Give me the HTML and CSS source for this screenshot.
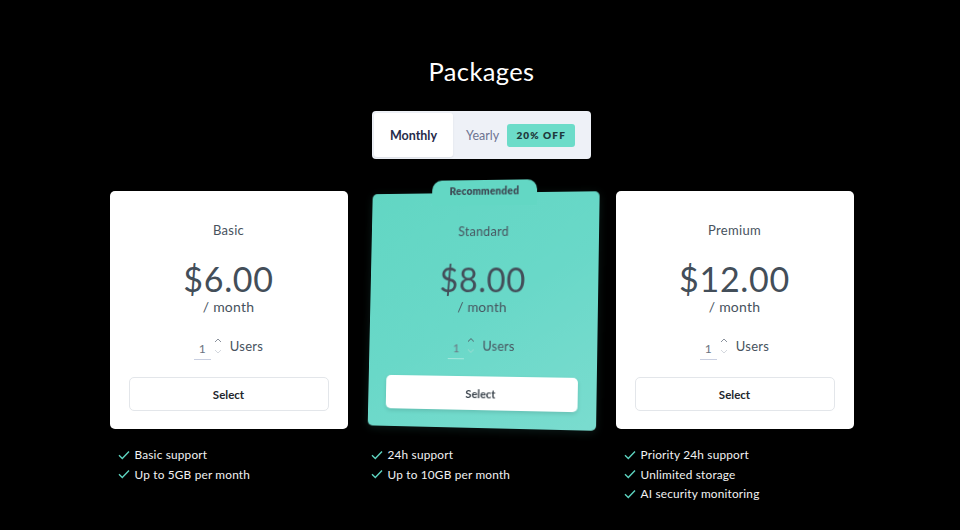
FILE: index.html
```html
<!DOCTYPE html>
<html>
<head>
<meta charset="utf-8">
<link rel="stylesheet" href="styles.css">
</head>
<body>
<div class="page">
  <h1 class="title">Packages</h1>
  <div class="toggle">
    <div class="seg seg-active">Monthly</div>
    <div class="seg seg-yearly">Yearly <span class="badge">20% OFF</span></div>
  </div>
  <div class="plans">
    <div class="plan">
      <div class="card">
        <div class="name">Basic</div>
        <div class="price">$6.00</div>
        <div class="per">/ month</div>
        <div class="users">
          <span class="qty">1</span>
          <svg class="arrows" viewBox="0 0 10 20"><path class="up" d="M2 6 L5 3 L8 6" /><path class="down" d="M2 14 L5 17 L8 14" /></svg>
          <span class="ulabel">Users</span>
        </div>
        <div class="btn">Select</div>
      </div>
      <ul class="features">
        <li><svg class="chk" viewBox="0 0 12 10"><path d="M1 5.2 L4.3 8.4 L11 1.4" fill="none" stroke="#5dd3bf" stroke-width="1.4"/></svg>Basic support</li>
        <li><svg class="chk" viewBox="0 0 12 10"><path d="M1 5.2 L4.3 8.4 L11 1.4" fill="none" stroke="#5dd3bf" stroke-width="1.4"/></svg>Up to 5GB per month</li>
      </ul>
    </div>
    <div class="plan">
      <div class="card card-rec">
        <div class="rec">Recommended</div>
        <div class="name">Standard</div>
        <div class="price">$8.00</div>
        <div class="per">/ month</div>
        <div class="users">
          <span class="qty">1</span>
          <svg class="arrows" viewBox="0 0 10 20"><path class="up" d="M2 6 L5 3 L8 6" /><path class="down" d="M2 14 L5 17 L8 14" /></svg>
          <span class="ulabel">Users</span>
        </div>
        <div class="btn btn-rec">Select</div>
      </div>
      <ul class="features">
        <li><svg class="chk" viewBox="0 0 12 10"><path d="M1 5.2 L4.3 8.4 L11 1.4" fill="none" stroke="#5dd3bf" stroke-width="1.4"/></svg>24h support</li>
        <li><svg class="chk" viewBox="0 0 12 10"><path d="M1 5.2 L4.3 8.4 L11 1.4" fill="none" stroke="#5dd3bf" stroke-width="1.4"/></svg>Up to 10GB per month</li>
      </ul>
    </div>
    <div class="plan">
      <div class="card">
        <div class="name">Premium</div>
        <div class="price">$12.00</div>
        <div class="per">/ month</div>
        <div class="users">
          <span class="qty">1</span>
          <svg class="arrows" viewBox="0 0 10 20"><path class="up" d="M2 6 L5 3 L8 6" /><path class="down" d="M2 14 L5 17 L8 14" /></svg>
          <span class="ulabel">Users</span>
        </div>
        <div class="btn">Select</div>
      </div>
      <ul class="features">
        <li><svg class="chk" viewBox="0 0 12 10"><path d="M1 5.2 L4.3 8.4 L11 1.4" fill="none" stroke="#5dd3bf" stroke-width="1.4"/></svg>Priority 24h support</li>
        <li><svg class="chk" viewBox="0 0 12 10"><path d="M1 5.2 L4.3 8.4 L11 1.4" fill="none" stroke="#5dd3bf" stroke-width="1.4"/></svg>Unlimited storage</li>
        <li><svg class="chk" viewBox="0 0 12 10"><path d="M1 5.2 L4.3 8.4 L11 1.4" fill="none" stroke="#5dd3bf" stroke-width="1.4"/></svg>AI security monitoring</li>
      </ul>
    </div>
  </div>
</div>
</body>
</html>
```

FILE: styles.css
```css
html, body {
  margin: 0;
  padding: 0;
  background: #000;
  font-family: "Lato", "Noto Sans", sans-serif;
}
.page {
  width: 960px;
  height: 530px;
  padding-left: 3px;
  box-sizing: border-box;
  display: flex;
  flex-direction: column;
  align-items: center;
  padding-top: 56px;
}
.title {
  margin: 0;
  font-size: 25.5px;
  line-height: 31px;
  font-weight: 400;
  color: #fff;
  letter-spacing: 0.4px;
}
.toggle {
  margin-top: 24px;
  display: flex;
  background: #eef1f7;
  border-radius: 4px;
  padding: 2px;
  height: 44px;
  width: 215px;
}
.seg {
  display: flex;
  align-items: center;
  font-size: 12.5px;
}
.seg-active {
  width: 79px;
  justify-content: center;
  background: #fff;
  border-radius: 3px;
  color: #262b4a;
  font-weight: 700;
  box-shadow: 0 1px 2px rgba(0,0,0,0.08);
}
.seg-yearly {
  padding-left: 13px;
  color: #6c7391;
  gap: 8px;
}
.badge {
  background: #6cdcc9;
  color: #1f3a3c;
  font-size: 10px;
  font-weight: 800;
  letter-spacing: 1.1px;
  border-radius: 3px;
  height: 23px;
  width: 68px;
  display: flex;
  align-items: center;
  justify-content: center;
}
.plans {
  margin-top: 32px;
  display: grid;
  grid-template-columns: repeat(3, 238px);
  gap: 15px;
}
.card {
  position: relative;
  background: #fff;
  border-radius: 5px;
  height: 238px;
  box-sizing: border-box;
  display: flex;
  flex-direction: column;
  align-items: center;
  padding: 31px 19px 0;
  color: #47525d;
}
.card-rec {
  background: linear-gradient(150deg, #62d6c3 0%, #69d8c8 50%, #7adccf 100%);
  transform: perspective(1700px) rotateY(-15deg) rotateX(3deg) rotateZ(0.3deg) scale(0.99);
  box-shadow: 0 2px 10px rgba(100,220,200,0.12);
}
.rec {
  position: absolute;
  top: -13px;
  left: 50%;
  transform: translateX(-50%);
  width: 110px;
  height: 26px;
  background: #63d7c4;
  border-radius: 10px 10px 0 0;
  font-size: 10.5px;
  font-weight: 800;
  color: #3e4b55;
  text-align: center;
  line-height: 22px;
  letter-spacing: 0.2px;
}
.name {
  font-size: 13px;
  line-height: 16px;
  letter-spacing: 0.3px;
}
.price {
  margin-top: 21px;
  font-size: 34px;
  line-height: 40px;
  font-weight: 400;
  color: #434e59;
  letter-spacing: 0.7px;
}
.per {
  font-size: 14px;
  line-height: 16px;
  margin-top: 0;
  letter-spacing: 0.2px;
}
.users {
  margin-top: 18px;
  display: flex;
  align-items: center;
  height: 26px;
}
.qty {
  width: 17px;
  text-align: center;
  font-size: 12px;
  color: #6b7380;
  border-bottom: 1px solid #c9cfe0;
  line-height: 20px;
  margin-top: 6px;
}
.arrows {
  width: 10px;
  height: 20px;
  margin-left: 2px;
  fill: none;
  stroke-width: 1;
}
.arrows .up {
  stroke: #8a919c;
}
.arrows .down {
  stroke: #d4d8de;
}
.card-rec .arrows .up {
  stroke: #4d5a63;
}
.card-rec .arrows .down {
  stroke: #9fdcd2;
}
.card-rec .qty {
  border-bottom-color: #a8e8de;
}
.ulabel {
  margin-left: 7px;
  font-size: 13px;
  letter-spacing: 0.3px;
}
.btn {
  margin-top: 18px;
  width: 100%;
  height: 34px;
  box-sizing: border-box;
  border: 1px solid #e3e6ea;
  border-radius: 5px;
  display: flex;
  align-items: center;
  justify-content: center;
  font-size: 11.5px;
  font-weight: 700;
  color: #22262c;
  background: #fff;
}
.btn-rec {
  border: none;
  box-shadow: 0 2px 4px rgba(0,0,0,0.12);
  color: #3a434c;
}
.features {
  list-style: none;
  margin: 16px 0 0 8px;
  padding: 0;
}
.features li {
  display: flex;
  align-items: center;
  height: 19.5px;
  font-size: 11.8px;
  color: #f2f2f2;
  letter-spacing: 0.2px;
}
.chk {
  width: 12px;
  height: 10px;
  margin-right: 5px;
}
```
